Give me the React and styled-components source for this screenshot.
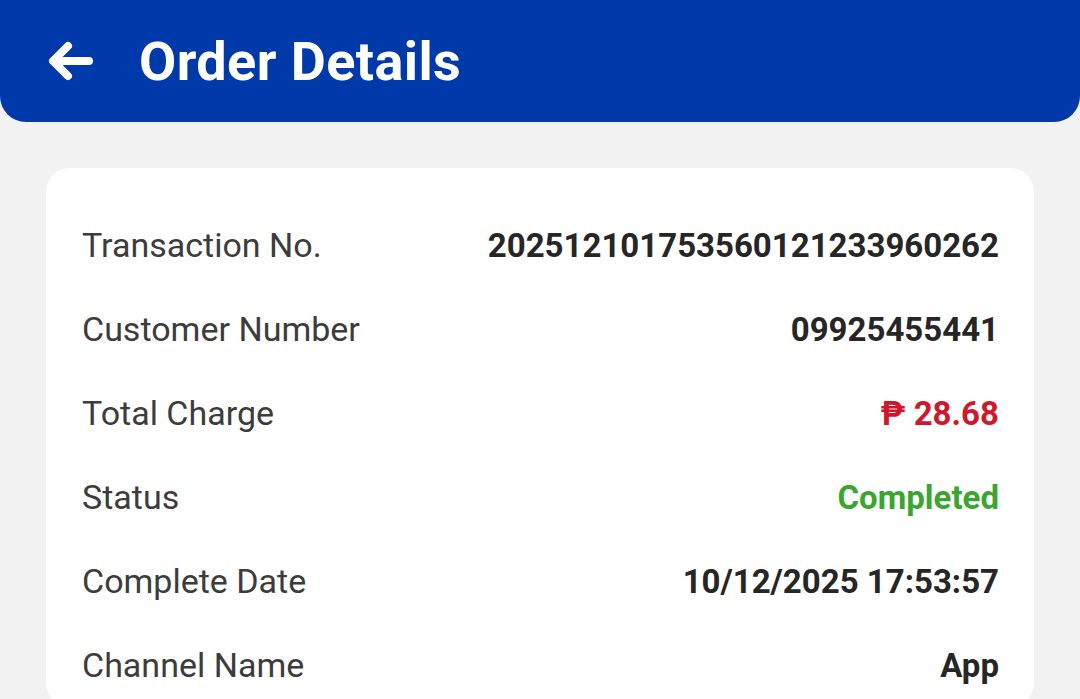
import styled, { createGlobalStyle } from "styled-components";

const Global = createGlobalStyle`
  html, body {
    margin: 0;
    padding: 0;
    background: #f2f2f2;
    font-family: Roboto, "Noto Sans", sans-serif;
  }
`;

const Page = styled.div`
  width: 1080px;
  height: 699px;
  overflow: hidden;
  background: #f2f2f2;
`;

const Header = styled.header`
  height: 122px;
  background: #0039a9;
  border-radius: 0 0 26px 26px;
  display: flex;
  align-items: center;
  padding: 0 0 0 46px;
  box-sizing: border-box;
  gap: 45px;
`;

const BackButton = styled.button`
  background: none;
  border: 0;
  padding: 0;
  width: 48px;
  height: 48px;
  display: flex;
  align-items: center;
  justify-content: center;
  cursor: pointer;
`;

const Title = styled.h1`
  margin: 0;
  color: #fff;
  font-size: 54px;
  font-weight: 700;
  letter-spacing: 0.4px;
`;

const Card = styled.section`
  margin: 46px 46px 0 46px;
  background: #fff;
  border-radius: 24px;
  padding: 35px 35px 0 36px;
  box-sizing: border-box;
`;

const Row = styled.div`
  display: flex;
  justify-content: space-between;
  align-items: center;
  height: 84px;
`;

const Label = styled.span`
  color: #3c3c3c;
  font-size: 34px;
  font-weight: 400;
`;

const Value = styled.span`
  color: ${(p) => p.$color || "#262626"};
  font-size: 33px;
  font-weight: 700;
`;

const rows = [
  ["Transaction No.", "20251210175356012123396 0262".replace(" ", "")],
  ["Customer Number", "09925455441"],
  ["Total Charge", "₱ 28.68", "#d0172c"],
  ["Status", "Completed", "#3aa62f"],
  ["Complete Date", "10/12/2025 17:53:57"],
  ["Channel Name", "App"],
];

const App = () => {
  return (
    <Page>
      <Global />
      <Header>
        <BackButton aria-label="Back">
          <svg width="46" height="42" viewBox="0 0 46 42" fill="none">
            <path
              d="M42 21H8M21 6L6 21l15 15"
              stroke="#fff"
              strokeWidth="8"
              strokeLinecap="round"
              strokeLinejoin="round"
            />
          </svg>
        </BackButton>
        <Title>Order Details</Title>
      </Header>
      <Card>
        {rows.map(([label, value, color]) => (
          <Row key={label}>
            <Label>{label}</Label>
            <Value $color={color}>{value}</Value>
          </Row>
        ))}
      </Card>
    </Page>
  );
};

export default App;
